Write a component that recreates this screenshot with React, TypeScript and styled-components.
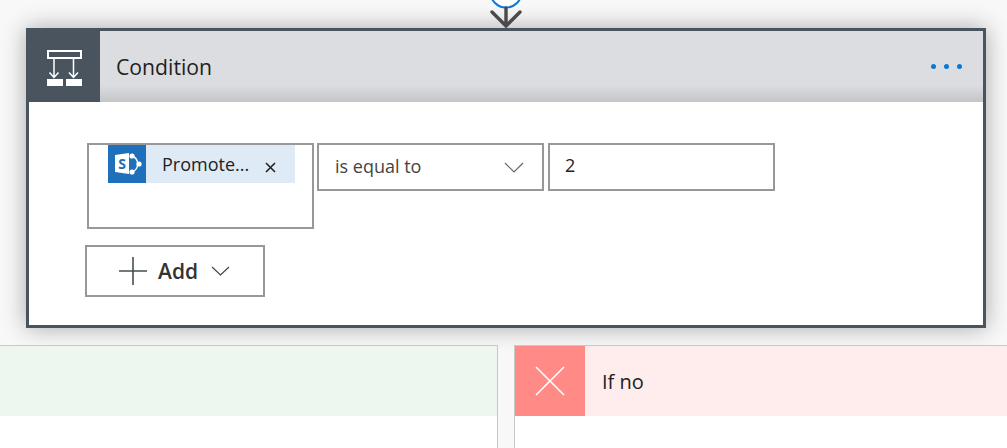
import React from 'react';
import styled, { createGlobalStyle } from 'styled-components';

const GlobalStyle = createGlobalStyle`
  html, body {
    margin: 0;
    padding: 0;
    background: #f8f8f8;
    overflow: hidden;
  }
  body {
    font-family: "Open Sans", "Noto Sans", "Liberation Sans", sans-serif;
    color: #222;
  }
`;

const Page = styled.div`
  width: 1007px;
  height: 448px;
  overflow: hidden;
  background: #f8f8f8;
`;

const Column = styled.div`
  width: 960px;
  margin-left: 26px;
  display: flex;
  flex-direction: column;
  align-items: center;
`;

const Connector = styled.svg`
  display: block;
  width: 40px;
  height: 28px;
  position: relative;
  z-index: 2;
`;

const Card = styled.div`
  width: 100%;
  box-sizing: border-box;
  border: 3px solid #4a545f;
  background: #fff;
  box-shadow: 0 0 22px rgba(0, 0, 0, 0.32);
`;

const CardHeader = styled.div`
  height: 71px;
  margin-left: -3px;
  display: flex;
  align-items: center;
  background: linear-gradient(to bottom, #dcdde0 0%, #dcdde0 76%, #c4c5c7 100%);
`;

const HeaderIcon = styled.div`
  width: 74px;
  height: 74px;
  margin-top: -3px;
  flex: none;
  display: flex;
  align-items: center;
  justify-content: center;
  padding: 5px 0 0 3px;
  box-sizing: border-box;
  background: #4a545f;
`;

const CardTitle = styled.div`
  flex: 1;
  margin: 1px 0 0 16px;
  font-size: 21.2px;
  line-height: 28px;
  color: #1f1f1f;
`;

const MoreDots = styled.div`
  display: flex;
  gap: 8px;
  margin-right: 21px;
`;

const Dot = styled.span`
  width: 5px;
  height: 5px;
  border-radius: 50%;
  background: #0a78d6;
`;

const CardBody = styled.div`
  padding: 41px 0 28px 56px;
  display: flex;
  flex-direction: column;
  align-items: flex-start;
  gap: 16px;
`;

const ConditionRow = styled.div`
  margin-left: 2px;
  display: flex;
  align-items: flex-start;
`;

const Field = styled.div<{ $tall?: boolean; $gap?: number }>`
  box-sizing: border-box;
  width: 227px;
  height: ${(p) => (p.$tall ? 86 : 48)}px;
  margin-left: ${(p) => p.$gap ?? 0}px;
  border: 2px solid #989898;
  background: #fff;
  display: flex;
  font-size: 18px;
  color: #222;
`;

const Token = styled.div`
  width: 187px;
  height: 38px;
  margin-left: 19px;
  display: flex;
  align-items: center;
  background: #deeaf6;
`;

const TokenIcon = styled.svg`
  display: block;
  width: 38px;
  height: 38px;
  flex: none;
  background: #1f70bb;
`;

const TokenLabel = styled.span`
  flex: 1;
  margin-left: 16px;
  font-size: 18px;
  line-height: 38px;
  white-space: nowrap;
`;

const TokenClose = styled.svg`
  display: block;
  width: 11px;
  height: 11px;
  margin: 6px 19px 0 0;
`;

const SelectText = styled.span`
  flex: 1;
  margin-left: 16px;
  line-height: 42px;
  color: #444;
`;

const Chevron = styled.svg`
  display: block;
  flex: none;
`;

const SelectChevron = styled(Chevron)`
  margin: 17px 18px 0 0;
`;

const ValueText = styled.span`
  margin-left: 15px;
  line-height: 41px;
`;

const AddButton = styled.button`
  box-sizing: border-box;
  width: 180px;
  height: 52px;
  padding: 0 0 0 32px;
  border: 2px solid #989898;
  background: #fff;
  display: flex;
  align-items: center;
  font-family: inherit;
  font-size: 21px;
  font-weight: 600;
  color: #333;
`;

const AddLabel = styled.span`
  margin: 0 13px 0 11px;
`;

const Branches = styled.div`
  margin-top: 17px;
  display: flex;
  gap: 16px;
`;

const Branch = styled.div<{ $side: 'yes' | 'no' }>`
  box-sizing: border-box;
  flex: none;
  width: ${(p) => (p.$side === 'yes' ? 498 : 493)}px;
  height: 103px;
  background: #fff;
  border-top: 1px solid #c8c8c8;
  ${(p) => (p.$side === 'yes' ? 'border-right' : 'border-left')}: 1px solid #c8c8c8;
`;

const BranchHeader = styled.div<{ $side: 'yes' | 'no' }>`
  height: 70px;
  display: flex;
  align-items: center;
  background: ${(p) => (p.$side === 'yes' ? '#edf6ef' : '#ffecec')};
`;

const BranchIcon = styled.div`
  width: 70px;
  height: 70px;
  flex: none;
  display: flex;
  align-items: center;
  justify-content: center;
  background: #ff8a86;
`;

const BranchLabel = styled.span`
  margin-left: 17px;
  font-size: 20px;
  color: #222;
`;

const App: React.FC = () => {
  return (
    <Page>
      <GlobalStyle />
      <Column>
        <Connector viewBox="0 0 40 28">
          <circle cx="20" cy="-8" r="15.5" fill="#fff" stroke="#0a78d6" strokeWidth="2" />
          <path d="M20 8V26M6 12L20 26L34 12" fill="none" stroke="#4a4a4a" strokeWidth="3.4" strokeLinecap="round" />
        </Connector>
        <Card>
          <CardHeader>
            <HeaderIcon>
              <svg width="35" height="36" viewBox="0 0 35 36">
                <rect x="1" y="1" width="33" height="7" fill="none" stroke="#fff" strokeWidth="2" />
                <path d="M7 9V27.5M2.5 22.5L7 27.5L11.5 22.5M26.5 9V27.5M22 22.5L26.5 27.5L31 22.5" fill="none" stroke="#fff" strokeWidth="1.5" />
                <rect x="0" y="29" width="16" height="7" fill="#fff" />
                <rect x="19" y="29" width="16" height="7" fill="#fff" />
              </svg>
            </HeaderIcon>
            <CardTitle>Condition</CardTitle>
            <MoreDots>
              <Dot />
              <Dot />
              <Dot />
            </MoreDots>
          </CardHeader>
          <CardBody>
            <ConditionRow>
              <Field $tall>
                <Token>
                  <TokenIcon viewBox="0 0 38 38">
                    <path d="M24 11A8.5 8.5 0 0 1 24 27" fill="none" stroke="#fff" strokeWidth="1.4" />
                    <circle cx="24" cy="11" r="2.6" fill="#fff" />
                    <circle cx="31" cy="19" r="2.6" fill="#fff" />
                    <circle cx="24" cy="27" r="2.6" fill="#fff" />
                    <path d="M7 10L21 8V29L7 27Z" fill="#fff" />
                    <text x="14" y="24" textAnchor="middle" fontSize="14" fontWeight="700" fill="#1f70bb">S</text>
                  </TokenIcon>
                  <TokenLabel>Promote...</TokenLabel>
                  <TokenClose viewBox="0 0 11 11">
                    <path d="M1 1L10 10M10 1L1 10" stroke="#222" strokeWidth="1.6" />
                  </TokenClose>
                </Token>
              </Field>
              <Field $gap={3}>
                <SelectText>is equal to</SelectText>
                <SelectChevron width="20" height="11" viewBox="0 0 20 11">
                  <path d="M1 1L10 10L19 1" fill="none" stroke="#666" strokeWidth="1.2" />
                </SelectChevron>
              </Field>
              <Field $gap={4}>
                <ValueText>2</ValueText>
              </Field>
            </ConditionRow>
            <AddButton>
              <svg width="28" height="28" viewBox="0 0 28 28">
                <path d="M0 14H28M14 0V28" stroke="#44504f" strokeWidth="1.6" />
              </svg>
              <AddLabel>Add</AddLabel>
              <Chevron width="19" height="10" viewBox="0 0 19 10">
                <path d="M1 1L9.5 9L18 1" fill="none" stroke="#444" strokeWidth="1.2" />
              </Chevron>
            </AddButton>
          </CardBody>
        </Card>
      </Column>
      <Branches>
        <Branch $side="yes">
          <BranchHeader $side="yes" />
        </Branch>
        <Branch $side="no">
          <BranchHeader $side="no">
            <BranchIcon>
              <svg width="30" height="30" viewBox="0 0 30 30">
                <path d="M1 1L29 29M29 1L1 29" stroke="#fff" strokeWidth="1.6" />
              </svg>
            </BranchIcon>
            <BranchLabel>If no</BranchLabel>
          </BranchHeader>
        </Branch>
      </Branches>
    </Page>
  );
};

export default App;
